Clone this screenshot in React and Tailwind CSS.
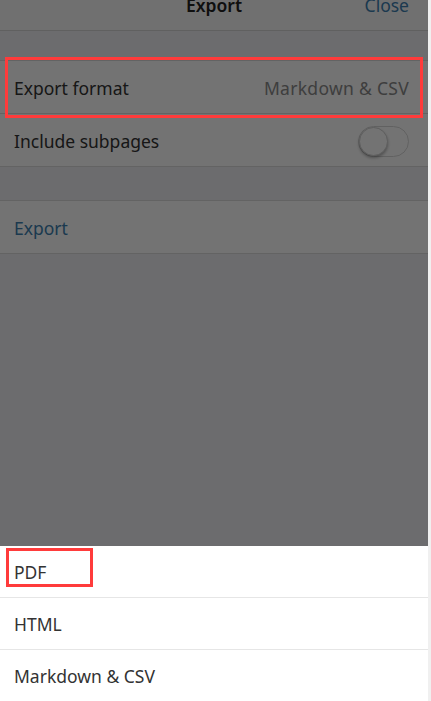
import React from "react";

const font = { fontFamily: '"Noto Sans", "Liberation Sans", Arial, sans-serif' };

const Row = ({ children, className = "" }) => (
  <div className={`h-[53px] flex items-center justify-between pl-[14px] pr-[19px] pt-[2px] bg-white border-b border-[#dcdcdc] ${className}`}>
    {children}
  </div>
);

const SheetOption = ({ label, last }) => (
  <div className={`h-[52px] flex items-center px-[14px] pt-[1px] text-[17.5px] text-[#333] ${last ? "" : "border-b border-[#e6e6e6]"}`}>
    {label}
  </div>
);

export default function App() {
  return (
    <div className="w-[431px] h-[701px] flex overflow-hidden bg-[#f0f0f0]" style={font}>
      <div className="relative w-[428px] h-full bg-[#efeff4] overflow-hidden">
        {/* header, scrolled partly off the top */}
        <div className="h-[31px] bg-[#f8f8f8] border-b border-[#d6d6d6] overflow-hidden">
          <div className="relative flex items-center justify-center h-[20px] mt-[-5px] text-[17.5px] leading-[20px]">
            <span className="font-semibold text-[#222]">Export</span>
            <span className="absolute right-[19px] text-[#3d7fb0]">Close</span>
          </div>
        </div>

        <div className="h-[29px]" />
        <div className="border-t border-[#dcdcdc]">
          <Row>
            <span className="text-[17.5px] text-[#333]">Export format</span>
            <span className="text-[17.5px] tracking-[0.3px] text-[#8a8a8a]">Markdown &amp; CSV</span>
          </Row>
          <Row>
            <span className="text-[17.5px] text-[#333]">Include subpages</span>
            <div className="relative w-[51px] h-[31px] rounded-full border border-[#d8d8d8] bg-white">
              <div className="absolute left-0 top-0 w-[29px] h-[29px] rounded-full bg-white border border-[#d0d0d0] shadow-[0_2px_3px_rgba(0,0,0,0.3)]" />
            </div>
          </Row>
        </div>

        <div className="h-[33px]" />
        <div className="border-t border-[#dcdcdc]">
          <Row>
            <span className="text-[17.5px] text-[#3d7fb0]">Export</span>
          </Row>
        </div>

        {/* dim overlay */}
        <div className="absolute inset-0 bg-black/[0.55]" />

        {/* annotation around export format */}
        <div className="absolute left-[5px] top-[57px] w-[418px] h-[61px] border-[3px] border-[#ff3b3b]" />

        {/* action sheet */}
        <div className="absolute left-0 right-0 bottom-0 h-[155px] bg-white">
          <SheetOption label="PDF" />
          <SheetOption label="HTML" />
          <SheetOption label="Markdown & CSV" last />
          <div className="absolute left-[6px] top-[2px] w-[87px] h-[39px] border-[3px] border-[#ff3b3b]" />
        </div>
      </div>
    </div>
  );
}
